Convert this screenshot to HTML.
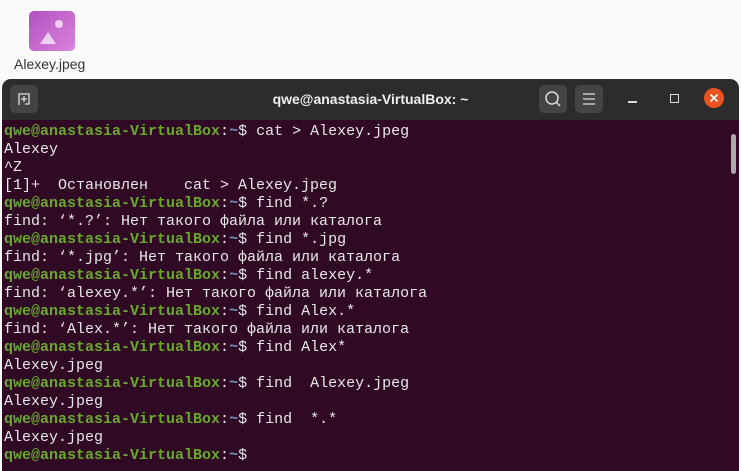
<!DOCTYPE html>
<html><head><meta charset="utf-8"><style>
html,body{margin:0;width:741px;height:471px;overflow:hidden}
body{background:#fafafa;position:relative;font-family:"Liberation Sans",sans-serif}
.icon{position:absolute;left:29px;top:11px;width:46px;height:40px;border-radius:5px;background:linear-gradient(135deg,#b24fc0,#d884dc);overflow:hidden}
.lbl{position:absolute;left:14px;top:56px;font-size:14px;color:#333}
.win{position:absolute;left:2px;top:79px;width:737px;height:392px;background:#2c2c2c;border-radius:9px 9px 0 0;overflow:hidden}
.title{position:absolute;left:0;right:0;top:0;height:41px;text-align:center;line-height:41px;color:#f0f0f0;font-weight:bold;font-size:14px}
.btn{position:absolute;top:6px;width:28px;height:28px;background:#444;border-radius:5px}
.term{position:absolute;left:0;top:41px;width:737px;height:351px;background:#300a24;overflow:hidden}
pre{margin:0;position:absolute;left:2px;top:3px;font-family:"Liberation Mono",monospace;font-size:15px;line-height:18px;color:#e8e8e8}
.g{color:#6aa82a;font-weight:bold}.b{color:#7496c9;font-weight:bold}
.sb{position:absolute;right:3px;top:14px;width:5px;height:40px;background:#aaa;border-radius:3px}
</style></head><body>
<div class="icon"><svg width="46" height="40"><path d="M0 20H46M23 0V40" stroke="#fff" stroke-opacity=".08"/><circle cx="30" cy="13" r="4" fill="#f0d0f2"/><path d="M11 33L19 21L27 33Z" fill="#f0d0f2"/></svg></div>
<div class="lbl">Alexey.jpeg</div>
<div class="win">
<div class="btn" style="left:8px"><svg width="28" height="28"><path d="M9 20V9h10v10h-4M11 14h6M14 11v6" stroke="#ddd" stroke-width="1.3" fill="none"/></svg></div>
<div class="title">qwe@anastasia-VirtualBox: ~</div>
<div class="btn" style="left:537px"><svg width="28" height="28"><circle cx="13" cy="13" r="6" stroke="#ddd" stroke-width="1.5" fill="none"/><path d="M17 17l4 4" stroke="#ddd" stroke-width="1.5"/></svg></div>
<div class="btn" style="left:573px"><svg width="28" height="28"><path d="M8 9h12M8 14h12M8 19h12" stroke="#ddd" stroke-width="1.3"/></svg></div>
<div style="position:absolute;left:626px;top:22px;width:9px;height:1.5px;background:#ddd"></div>
<div style="position:absolute;left:668px;top:15px;width:7px;height:7px;border:1.3px solid #ddd"></div>
<div style="position:absolute;left:702px;top:9px;width:20px;height:20px;border-radius:50%;background:#e95420"><svg width="20" height="20"><path d="M6.5 6.5l7 7M13.5 6.5l-7 7" stroke="#fff" stroke-width="1.6"/></svg></div>
<div class="term"><div class="sb"></div>
<pre><span class="g">qwe@anastasia-VirtualBox</span>:<span class="b">~</span>$ cat &gt; Alexey.jpeg
Alexey
^Z
[1]+  Остановлен    cat &gt; Alexey.jpeg
<span class="g">qwe@anastasia-VirtualBox</span>:<span class="b">~</span>$ find *.?
find: ‘*.?’: Нет такого файла или каталога
<span class="g">qwe@anastasia-VirtualBox</span>:<span class="b">~</span>$ find *.jpg
find: ‘*.jpg’: Нет такого файла или каталога
<span class="g">qwe@anastasia-VirtualBox</span>:<span class="b">~</span>$ find alexey.*
find: ‘alexey.*’: Нет такого файла или каталога
<span class="g">qwe@anastasia-VirtualBox</span>:<span class="b">~</span>$ find Alex.*
find: ‘Alex.*’: Нет такого файла или каталога
<span class="g">qwe@anastasia-VirtualBox</span>:<span class="b">~</span>$ find Alex*
Alexey.jpeg
<span class="g">qwe@anastasia-VirtualBox</span>:<span class="b">~</span>$ find  Alexey.jpeg
Alexey.jpeg
<span class="g">qwe@anastasia-VirtualBox</span>:<span class="b">~</span>$ find  *.*
Alexey.jpeg
<span class="g">qwe@anastasia-VirtualBox</span>:<span class="b">~</span>$</pre>
</div></div>
</body></html>
